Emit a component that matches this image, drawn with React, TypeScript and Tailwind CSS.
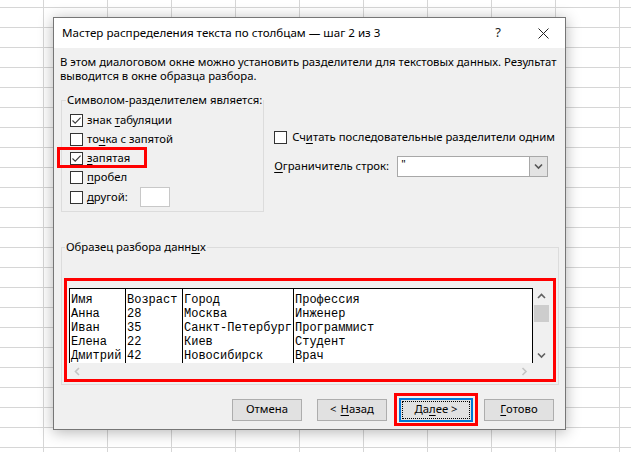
import React from "react";

// mnemonic letter (Windows-style underlined accelerator)
const M = ({ children }: { children: React.ReactNode }) => (
  <span className="underline underline-offset-[2px] decoration-1">{children}</span>
);

function CheckBox({ checked = false }: { checked?: boolean }) {
  return (
    <span className="w-[13px] h-[13px] border border-[#333333] bg-white flex items-center justify-center shrink-0">
      {checked && (
        <svg width="11" height="11" viewBox="0 0 11 11">
          <path d="M1.5 5.5 L4.2 8.2 L9.6 2.6" fill="none" stroke="#3a3a3a" strokeWidth="1.1" />
        </svg>
      )}
    </span>
  );
}

const Chevron = ({ dir, color }: { dir: "up" | "down" | "left" | "right"; color: string }) => {
  const d = {
    up: "M1 5 L4.5 1.5 L8 5",
    down: "M1 1.5 L4.5 5 L8 1.5",
    left: "M5 1 L1.5 4.5 L5 8",
    right: "M1.5 1 L5 4.5 L1.5 8",
  }[dir];
  const vertical = dir === "up" || dir === "down";
  return (
    <svg width={vertical ? 9 : 7} height={vertical ? 7 : 9} viewBox={vertical ? "0 0 9 7" : "0 0 7 9"}>
      <path d={d} fill="none" stroke={color} strokeWidth="1.6" />
    </svg>
  );
};

const rows = [
  ["Имя", "Возраст", "Город", "Профессия"],
  ["Анна", "28", "Москва", "Инженер"],
  ["Иван", "35", "Санкт-Петербург", "Программист"],
  ["Елена", "22", "Киев", "Студент"],
  ["Дмитрий", "42", "Новосибирск", "Врач"],
];
const colWidths = ["w-[56px]", "w-[57px]", "w-[111px]", "flex-1"];

function Button({ children }: { children: React.ReactNode }) {
  return (
    <div className="w-[70px] h-[22px] bg-[#e1e1e1] border border-[#adadad] flex items-center justify-center">
      {children}
    </div>
  );
}

export default function App() {
  return (
    <div className="w-[631px] h-[452px] overflow-hidden whitespace-nowrap bg-white [background-image:linear-gradient(to_right,#d6d6d6_1px,transparent_1px),linear-gradient(to_bottom,#d6d6d6_1px,transparent_1px)] [background-size:64px_20px] [background-position:43px_7px] pl-[53px] pt-[17px] font-['Noto_Sans',sans-serif] text-[11.3px] text-black">
      <div className="w-[513px] h-[413px] border border-[#767676] bg-[#f0f0f0] shadow-[0_2px_14px_rgba(0,0,0,0.3)] flex flex-col">
        {/* title bar */}
        <div className="h-[30px] bg-white flex items-center shrink-0">
          <div className="flex-1 pl-[8px] leading-[16px] text-[11.6px]">Мастер распределения текста по столбцам — шаг 2 из 3</div>
          <div className="w-[46px] text-center text-[13px] text-[#222]">?</div>
          <div className="w-[44px] flex items-center justify-center">
            <svg width="11" height="11" viewBox="0 0 11 11">
              <path d="M0.5 0.5 L10.5 10.5 M10.5 0.5 L0.5 10.5" stroke="#222" strokeWidth="1" />
            </svg>
          </div>
        </div>

        {/* intro */}
        <p className="pl-[6px] pt-[7px] leading-[14px]">
          В этом диалоговом окне можно установить разделители для текстовых данных. Результат
          <br />
          выводится в окне образца разбора.
        </p>

        {/* delimiters + options */}
        <div className="flex mt-[9px]">
          <fieldset className="ml-[7px] w-[202px] shrink-0 border border-[#dcdcdc] p-0">
            <legend className="ml-[4px] px-[1px] leading-[16px]">Символом-разделителем является:</legend>
            <div className="pl-[8px] pt-[3px] pb-[4px] flex flex-col">
              <div className="h-[19px] flex items-center gap-[4px]">
                <CheckBox checked />
                <span>знак <M>т</M>абуляции</span>
              </div>
              <div className="h-[19px] flex items-center gap-[4px]">
                <CheckBox />
                <span>то<M>ч</M>ка с запятой</span>
              </div>
              <div className="relative h-[19px] flex items-center gap-[4px]">
                <CheckBox checked />
                <span><M>з</M>апятая</span>
                <div className="absolute left-[-13px] top-[-2px] w-[90px] h-[21px] border-[3px] border-[#ff0000]" />
              </div>
              <div className="h-[19px] flex items-center gap-[4px]">
                <CheckBox />
                <span><M>п</M>робел</span>
              </div>
              <div className="h-[20px] flex items-center gap-[4px]">
                <CheckBox />
                <span><M>д</M>ругой:</span>
                <div className="ml-[8px] w-[30px] h-[20px] bg-white border border-[#c8c8c8]" />
              </div>
            </div>
          </fieldset>

          <div className="ml-[10px] pt-[36px] flex flex-col">
            <div className="h-[19px] flex items-center gap-[5px]">
              <CheckBox />
              <span>Сч<M>и</M>тать последовательные разделители одним</span>
            </div>
            <div className="mt-[9px] h-[21px] flex items-center">
              <span className="w-[123px]"><M>О</M>граничитель строк:</span>
              <div className="w-[151px] h-[21px] border border-[#a8a8a8] bg-white flex">
                <div className="flex-1 pl-[3px] leading-[14px] text-[11px]">"</div>
                <div className="w-[18px] bg-[#e3e3e3] border-l border-[#a8a8a8] flex items-center justify-center">
                  <Chevron dir="down" color="#555" />
                </div>
              </div>
            </div>
          </div>
        </div>

        {/* data preview */}
        <fieldset className="ml-[7px] mt-[27px] w-[498px] border border-[#dcdcdc] p-0">
          <legend className="ml-[3px] px-[1px] leading-[16px]">Образец разбора данн<M>ы</M>х</legend>
          <div className="pt-[23px] pl-[2px] pb-[2px]">
            <div className="w-[492px] border-[3px] border-[#ff0000]">
              <div className="bg-[#f0f0f0] pl-[2px] pt-[7px] flex flex-col">
                <div className="flex">
                  <div className="w-[464px] h-[75px] bg-white border-t border-r border-black flex font-['Liberation_Mono',monospace] text-[12px] leading-[14px]">
                    {colWidths.map((w, ci) => (
                      <div key={ci} className={`${w} border-l border-black pt-[4px] pl-[1px] flex flex-col`}>
                        {rows.map((r, ri) => (
                          <div key={ri} className="h-[14px]">{r[ci]}</div>
                        ))}
                      </div>
                    ))}
                  </div>
                  <div className="w-[17px] h-[75px] flex flex-col items-center">
                    <div className="h-[16px] flex items-center justify-center">
                      <Chevron dir="up" color="#606060" />
                    </div>
                    <div className="mt-[1px] w-[15px] h-[17px] bg-[#cdcdcd]" />
                    <div className="flex-1" />
                    <div className="h-[16px] flex items-center justify-center">
                      <Chevron dir="down" color="#606060" />
                    </div>
                  </div>
                </div>
                <div className="w-[464px] h-[16px] flex items-center justify-between px-[5px]">
                  <Chevron dir="left" color="#c4c4c4" />
                  <Chevron dir="right" color="#c4c4c4" />
                </div>
              </div>
            </div>
          </div>
        </fieldset>

        {/* buttons */}
        <div className="mt-[8px] flex items-center justify-end pr-[11px]">
          <Button>Отмена</Button>
          <div className="ml-[15px]">
            <Button>
              &lt; <span className="ml-[4px]"><M>Н</M>азад</span>
            </Button>
          </div>
          <div className="ml-[7px] w-[84px] h-[33px] border-[3px] border-[#ff0000] flex items-center justify-center">
            <div className="w-[74px] h-[24px] bg-[#e1e1e1] border-2 border-[#0078d7] flex">
              <div className="flex-1 m-[1px] border border-dotted border-black flex items-center justify-center">
                Да<M>л</M>ее &gt;
              </div>
            </div>
          </div>
          <div className="ml-[6px]">
            <Button>
              <M>Г</M>отово
            </Button>
          </div>
        </div>
      </div>
    </div>
  );
}
